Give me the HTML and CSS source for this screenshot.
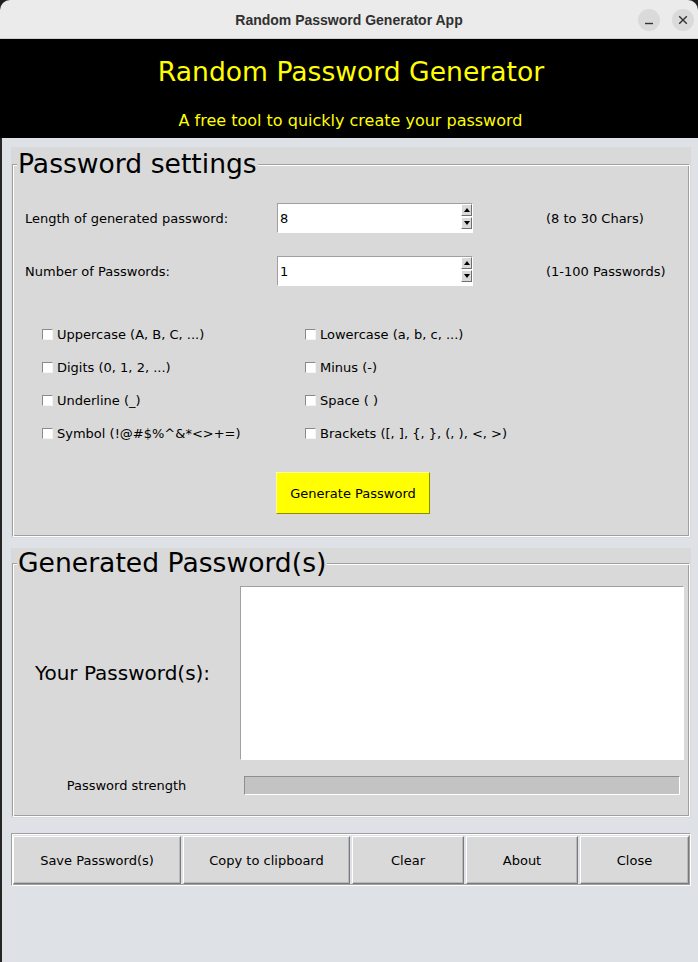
FILE: index.html
```html
<!DOCTYPE html>
<html>
<head>
<meta charset="utf-8">
<title>Random Password Generator App</title>
<link rel="stylesheet" href="styles.css">
</head>
<body>
<div class="window">
  <div class="titlebar">
    <span class="title">Random Password Generator App</span>
    <div class="wbtns">
      <span class="wbtn"><svg width="22" height="22" viewBox="0 0 22 22"><path d="M7 14.5H15" stroke="#333" stroke-width="1.4"/></svg></span>
      <span class="wbtn"><svg width="22" height="22" viewBox="0 0 22 22"><path d="M7.2 7.2L14.8 14.8M14.8 7.2L7.2 14.8" stroke="#333" stroke-width="1.4"/></svg></span>
    </div>
  </div>
  <header class="header">
    <h1>Random Password Generator</h1>
    <p>A free tool to quickly create your password</p>
  </header>
  <main class="content">
    <section class="frame">
      <fieldset class="group settings">
        <legend>Password settings</legend>
        <div class="fields">
          <span class="lbl">Length of generated password:</span>
          <div class="spin"><span class="val">8</span><span class="arrows"><span class="arrow up"></span><span class="arrow down"></span></span></div>
          <span class="hint">(8 to 30 Chars)</span>
          <span class="lbl">Number of Passwords:</span>
          <div class="spin"><span class="val">1</span><span class="arrows"><span class="arrow up"></span><span class="arrow down"></span></span></div>
          <span class="hint">(1-100 Passwords)</span>
        </div>
        <div class="checks">
          <label class="ck"><span class="cb"></span>Uppercase (A, B, C, ...)</label>
          <label class="ck"><span class="cb"></span>Lowercase (a, b, c, ...)</label>
          <label class="ck"><span class="cb"></span>Digits (0, 1, 2, ...)</label>
          <label class="ck"><span class="cb"></span>Minus (-)</label>
          <label class="ck"><span class="cb"></span>Underline (_)</label>
          <label class="ck"><span class="cb"></span>Space ( )</label>
          <label class="ck"><span class="cb"></span>Symbol (!@#$%^&amp;*&lt;&gt;+=)</label>
          <label class="ck"><span class="cb"></span>Brackets ([, ], {, }, (, ), &lt;, &gt;)</label>
        </div>
        <button class="generate">Generate Password</button>
      </fieldset>
    </section>
    <section class="frame frame2">
      <fieldset class="group output">
        <legend>Generated Password(s)</legend>
        <div class="outgrid">
          <span class="biglbl">Your Password(s):</span>
          <div class="textbox"></div>
          <span class="strength">Password strength</span>
          <div class="progress"></div>
        </div>
      </fieldset>
    </section>
    <div class="bar">
      <button class="btn w1">Save Password(s)</button>
      <button class="btn w2">Copy to clipboard</button>
      <button class="btn w3">Clear</button>
      <button class="btn w3">About</button>
      <button class="btn w4">Close</button>
    </div>
  </main>
</div>
</body>
</html>
```
FILE: styles.css
```css
* { box-sizing: border-box; }
html, body { margin: 0; padding: 0; }
body {
  width: 698px;
  height: 962px;
  background: #1f1f1f;
  font-family: "DejaVu Sans", sans-serif;
  font-size: 13px;
  color: #000;
  overflow: hidden;
}
.window { height: 962px; display: flex; flex-direction: column; }

.titlebar {
  height: 39px;
  background: #ebebeb;
  border-radius: 10px 10px 0 0;
  border-bottom: 1px solid #cfcfcf;
  display: grid;
  grid-template-columns: 1fr auto 1fr;
  align-items: center;
}
.title {
  grid-column: 2;
  font: bold 14px "Liberation Sans", sans-serif;
  color: #303030;
  padding-top: 2px;
}
.wbtns { grid-column: 3; justify-self: end; display: flex; gap: 12px; margin-right: 4px; padding-top: 1px; }
.wbtn {
  width: 22px; height: 22px; border-radius: 50%;
  background: #dadada;
  display: flex; align-items: center; justify-content: center;
}
.wbtn svg { display: block; }

.header { height: 99px; background: #000; text-align: center; color: #ffff00; padding-top: 17px; }
.header h1 { margin: 0; font-size: 26.6px; line-height: 32px; font-weight: normal; padding-left: 4px; }
.header p { margin: 23px 0 0; font-size: 16px; line-height: 20px; padding-left: 3px; }

.content {
  flex: 1;
  background: #dee2e6;
  border-left: 2px solid #262626;
  padding-top: 9px;
}
.frame {
  margin-left: 9px;
  width: 680px;
  background: #d9d9d9;
  padding: 2px 1px 1px 1px;
}
.frame2 { margin-top: 10px; padding-top: 0; }
.group {
  margin: 0;
  min-width: 0;
  padding: 0;
  border: 1px solid;
  border-color: #a0a0a0 #fff #fff #a0a0a0;
  box-shadow: inset 1px 1px #fff, inset -1px -1px #a0a0a0;
}
.group legend {
  font-size: 26.6px;
  line-height: 30px;
  padding: 0 1px;
  margin-left: 4px;
  background: #d9d9d9;
}
.settings { padding-bottom: 22px; }
.fields {
  display: grid;
  grid-template-columns: 252px 196px auto;
  row-gap: 23px;
  align-items: center;
  margin-top: 24px;
  padding-left: 12px;
}
.hint { margin-left: 73px; }
.spin {
  height: 30px;
  background: #fff;
  border: 1px solid;
  border-color: #a0a0a0 #fff #fff #a0a0a0;
  display: flex;
  align-items: center;
  justify-content: space-between;
}
.val { padding-left: 2px; }
.arrows { align-self: flex-start; display: flex; flex-direction: column; gap: 1px; }
.arrow {
  width: 11px; height: 12px;
  background: #d9d9d9;
  border: 1px solid;
  border-color: #fff #6f6f6f #6f6f6f #fff;
  display: flex; align-items: center; justify-content: center;
}
.arrow::after { content: ""; width: 0; height: 0; border-left: 3.5px solid transparent; border-right: 3.5px solid transparent; }
.up::after { border-bottom: 4px solid #000; }
.down::after { border-top: 4px solid #000; }

.checks {
  display: grid;
  grid-template-columns: 263px auto;
  grid-auto-rows: 33px;
  align-items: center;
  margin-top: 32px;
  padding-left: 29px;
}
.ck { display: flex; align-items: center; gap: 4px; }
.cb {
  width: 11px; height: 11px;
  background: #fff;
  border: 1px solid;
  border-color: #8a8a8a #f4f4f4 #f4f4f4 #8a8a8a;
}
.generate {
  display: block;
  margin: 22px 0 0 263px;
  width: 154px; height: 42px;
  background: #ffff00;
  border: 1px solid;
  border-color: #ffff99 #8c8c00 #8c8c00 #ffff99;
  font: 13px "DejaVu Sans", sans-serif;
  color: #000;
  padding: 0;
}

.output { padding-bottom: 21px; }
.outgrid {
  display: grid;
  grid-template-columns: 227px 444px;
  row-gap: 16px;
  align-items: center;
  margin-top: 8px;
}
.biglbl { font-size: 20px; text-align: center; padding-right: 8px; }
.textbox {
  height: 174px;
  background: #fff;
  border: 1px solid;
  border-color: #a0a0a0 #fff #fff #a0a0a0;
}
.strength { text-align: center; }
.progress {
  height: 19px;
  margin: 0 4px;
  background: #c3c3c3;
  border: 1px solid;
  border-color: #8e8e8e #fff #fff #8e8e8e;
}

.bar {
  margin: 15px 0 0 9px;
  width: 680px;
  display: flex;
  gap: 2px;
  border: 1px solid;
  border-color: #a0a0a0 #fff #fff #a0a0a0;
  box-shadow: inset 1px 1px #fff, inset -1px -1px #a0a0a0;
  padding: 2px 1px 1px 1px;
}
.btn {
  height: 48px;
  background: #d9d9d9;
  border: 1px solid;
  border-color: #fff #7a7a7a #7a7a7a #fff;
  box-shadow: inset -1px -1px #b8b8b8;
  font: 13px "DejaVu Sans", sans-serif;
  color: #000;
  padding: 0;
}
.w1 { width: 168px; }
.w2 { width: 167px; }
.w3 { width: 112px; }
.w4 { width: 109px; }
```
